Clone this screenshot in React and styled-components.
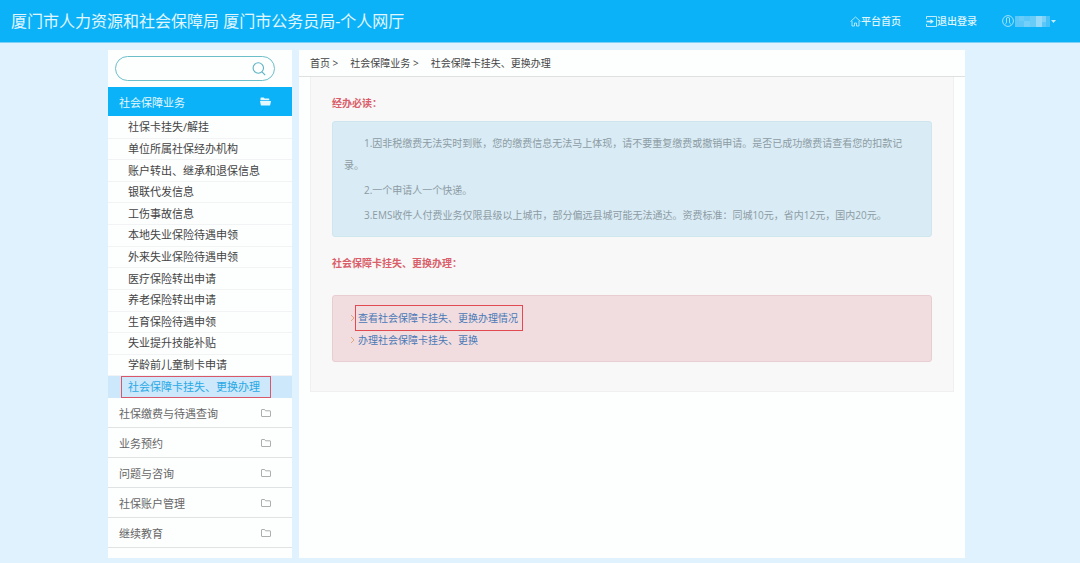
import styled, { createGlobalStyle } from 'styled-components'

const GlobalStyle = createGlobalStyle`
  * {
    box-sizing: border-box;
  }
  body {
    margin: 0;
    background: #e0f2fd;
    font-family: 'Open Sans', 'Noto Sans CJK SC', sans-serif;
    font-size: 10px;
    color: #444;
  }
  ul, ol, p, h1, h2 {
    margin: 0;
    padding: 0;
    list-style: none;
  }
  a {
    color: inherit;
    text-decoration: none;
  }
  button, input {
    font: inherit;
    color: inherit;
    border: 0;
    padding: 0;
    background: none;
  }
`

const Page = styled.div`
  display: flex;
  flex-direction: column;
  min-height: 100vh;
`

const Header = styled.header`
  display: flex;
  align-items: center;
  justify-content: space-between;
  height: 43px;
  padding: 0 24px 0 11px;
  color: #e2f6ff;
  background: #0bb2f8;
  border-bottom: 1px solid #7fd0f5;
`

const SiteTitle = styled.h1`
  font-size: 16px;
  font-weight: 400;
  line-height: 24px;
`

const TopNav = styled.nav`
  display: flex;
  align-items: center;
  gap: 25px;
`

const TopLink = styled.a`
  display: flex;
  align-items: center;
  font-weight: 500;
  line-height: 16px;
`

const UserButton = styled.button`
  display: flex;
  align-items: center;
  gap: 1px;
  cursor: pointer;
`

const Body = styled.div`
  flex: 1;
  display: flex;
  gap: 7px;
  padding: 7px 115px 5px 108px;
`

const Sidebar = styled.aside`
  width: 184px;
  flex-shrink: 0;
  background: #fdfefe;
`

const SearchBox = styled.form`
  display: flex;
  align-items: center;
  height: 25px;
  margin: 6px 17px 6px 7px;
  padding: 0 8px 0 12px;
  border: 1px solid #6cbfc9;
  border-radius: 13px;
  input {
    flex: 1;
    min-width: 0;
    outline: none;
  }
  button {
    display: flex;
    cursor: pointer;
  }
`

const Category = styled.button`
  display: flex;
  align-items: center;
  justify-content: space-between;
  width: 100%;
  height: ${p => (p.$open ? 29 : 30)}px;
  padding: 0 21px 0 11px;
  font-size: 11px;
  color: ${p => (p.$open ? '#e6f8ff' : '#666')};
  background: ${p => (p.$open ? '#0bb2f8' : 'transparent')};
  border-bottom: ${p => (p.$open ? '0' : '1px solid #e0e3e4')};
  cursor: pointer;
`

const SubMenu = styled.ul`
  display: grid;
  grid-auto-rows: 1fr;
  min-height: 282px;
  padding-top: 1px;
`

const SubItem = styled.li`
  display: flex;
  align-items: center;
  padding-left: 20px;
  font-size: 11px;
  line-height: 16px;
  color: ${p => (p.$active ? '#2aa9e6' : '#444')};
  background: ${p => (p.$active ? '#cce8fa' : 'transparent')};
  border-bottom: 1px solid ${p => (p.$active ? '#cce8fa' : '#f1f3f4')};
  a {
    outline: ${p => (p.$active ? '1px solid #d8586a' : '0')};
    outline-offset: 2px;
    padding: 0 8px 0 4px;
    margin-left: -4px;
  }
`

const Main = styled.main`
  flex: 1;
  min-width: 0;
  background: #fdfefe;
`

const Breadcrumb = styled.ol`
  display: flex;
  gap: 12px;
  padding: 0 11px;
  line-height: 26px;
  border-bottom: 1px solid #dfe1e1;
`

const Panel = styled.section`
  margin: 0 11px;
  padding: 16px 21px 29px;
  background: #f8f8f8;
  border: 1px solid #f0f0f0;
  border-top: 0;
`

const PanelTitle = styled.h2`
  margin-bottom: ${p => p.$gap}px;
  font-size: 10px;
  font-weight: 700;
  line-height: 20px;
  color: #d9606a;
`

const Notice = styled.div`
  display: grid;
  gap: 3px;
  margin-bottom: 16px;
  padding: 10px 11px;
  line-height: 22px;
  color: #8c9ba3;
  background: #d9ebf5;
  border: 1px solid #cfe6ef;
  border-radius: 3px;
  p {
    text-indent: 20px;
  }
`

const LinkBox = styled.ul`
  padding: 11px 17px 10px;
  background: #f1dde0;
  border: 1px solid #e8cdd2;
  border-radius: 3px;
`

const LinkItem = styled.li`
  display: flex;
  align-items: center;
  gap: 3px;
  height: 22px;
  color: #4a78b5;
  a {
    padding-right: 2px;
    line-height: 20px;
    outline: ${p => (p.$marked ? '1px solid #e04a50' : '0')};
    outline-offset: 2px;
  }
`

const HomeIcon = () => (
  <svg width="11" height="11" viewBox="0 0 11 11" fill="none" stroke="#d3f2ff" strokeWidth="0.8">
    <path d="M0.5 5.5 5.5 1l5 4.5M2 5v5h2.5V7h2v3H9V5" />
  </svg>
)

const LogoutIcon = () => (
  <svg width="11" height="11" viewBox="0 0 11 11" fill="none" stroke="#d3f2ff" strokeWidth="0.9">
    <path d="M0.5 3V0.500h10v10H0.500V8" />
    <path d="M0.500 5.500h5" strokeWidth="1.6" />
    <path d="M4.500 3 7.800 5.500 4.500 8z" fill="#d3f2ff" stroke="none" />
  </svg>
)

const UserIcon = () => (
  <svg width="12" height="12" viewBox="0 0 12 12" fill="none" stroke="#c5edff" strokeWidth="0.8">
    <circle cx="6" cy="6" r="5.4" />
    <path d="M4.500 3v4.200c0 1-.6 1.400-1.300 2M7.500 3v4.200c0 1 .6 1.400 1.300 2M4.500 3c.8-.7 2.200-.7 3 0" />
  </svg>
)

const MaskedName = () => (
  <svg width="35" height="11" viewBox="0 0 35 11" shapeRendering="crispEdges">
    <rect width="35" height="11" fill="#5cc8f9" />
    <rect x="4" width="5" height="5" fill="#68ccf9" />
    <rect x="9" y="5" width="6" height="6" fill="#74d0f9" />
    <rect x="15" width="6" height="11" fill="#68ccf8" />
    <rect x="21" width="6" height="11" fill="#96daf9" />
    <rect x="27" width="4" height="6" fill="#7ad2f9" />
    <rect x="31" width="4" height="11" fill="#48c1f8" />
  </svg>
)

const Caret = () => (
  <svg width="5" height="3" viewBox="0 0 5 3">
    <path d="M0 0h5L2.5 3z" fill="#c5edff" />
  </svg>
)

const SearchIcon = () => (
  <svg width="14" height="14" viewBox="0 0 14 14" fill="none" stroke="#5cb3c4" strokeWidth="1.1">
    <circle cx="6.3" cy="6" r="5.2" />
    <path d="m10 9.8 3.2 3.4" />
  </svg>
)

const FolderIcon = () => (
  <svg width="10" height="8" viewBox="0 0 10 8" fill="none" stroke="#999" strokeWidth="0.8">
    <path d="M.5 7V1q0-.5.5-.5h2.6l1 1.3H9q.5 0 .5.5V7q0 .5-.5.5H1Q.5 7.5.5 7z" />
  </svg>
)

const FolderOpenIcon = () => (
  <svg width="11" height="9" viewBox="0 0 11 9" fill="#e6f8ff">
    <path d="M.5 3.200V1q0-.6.6-.6h2.600l1 1.200h4q.6 0 .6.6v1z" />
    <path d="M0 4h11l-.8 4q-.1.500-.6.500H1.400q-.5 0-.6-.5z" />
  </svg>
)

const Chevron = () => (
  <svg width="5" height="8" viewBox="0 0 5 8" fill="none" stroke="#e0a070" strokeWidth="0.9">
    <path d="m1 1 3 3-3 3" />
  </svg>
)

const subMenu = [
  '社保卡挂失/解挂',
  '单位所属社保经办机构',
  '账户转出、继承和退保信息',
  '银联代发信息',
  '工伤事故信息',
  '本地失业保险待遇申领',
  '外来失业保险待遇申领',
  '医疗保险转出申请',
  '养老保险转出申请',
  '生育保险待遇申领',
  '失业提升技能补贴',
  '学龄前儿童制卡申请',
  '社会保障卡挂失、更换办理',
]

const categories = ['社保缴费与待遇查询', '业务预约', '问题与咨询', '社保账户管理', '继续教育']

const notices = [
  '1.因非税缴费无法实时到账，您的缴费信息无法马上体现，请不要重复缴费或撤销申请。是否已成功缴费请查看您的扣款记录。',
  '2.一个申请人一个快递。',
  '3.EMS收件人付费业务仅限县级以上城市，部分偏远县城可能无法通达。资费标准：同城10元，省内12元，国内20元。',
]

const App = () => {
  return (
    <>
      <GlobalStyle />
      <Page>
        <Header>
          <SiteTitle>厦门市人力资源和社会保障局 厦门市公务员局-个人网厅</SiteTitle>
          <TopNav>
            <TopLink href="#home"><HomeIcon />平台首页</TopLink>
            <TopLink href="#logout"><LogoutIcon />退出登录</TopLink>
            <UserButton type="button" aria-label="用户">
              <UserIcon />
              <MaskedName />
              <Caret />
            </UserButton>
          </TopNav>
        </Header>
        <Body>
          <Sidebar>
            <SearchBox onSubmit={e => e.preventDefault()}>
              <input type="text" aria-label="搜索" />
              <button type="submit" aria-label="搜索"><SearchIcon /></button>
            </SearchBox>
            <Category type="button" $open>社会保障业务<FolderOpenIcon /></Category>
            <SubMenu>
              {subMenu.map((name, idx) => (
                <SubItem key={name} $active={idx === subMenu.length - 1}>
                  <a href="#item">{name}</a>
                </SubItem>
              ))}
            </SubMenu>
            {categories.map(name => (
              <Category key={name} type="button">{name}<FolderIcon /></Category>
            ))}
          </Sidebar>
          <Main>
            <Breadcrumb>
              <li><a href="#home">首页</a> &gt;</li>
              <li><a href="#business">社会保障业务</a> &gt;</li>
              <li>社会保障卡挂失、更换办理</li>
            </Breadcrumb>
            <Panel>
              <PanelTitle $gap={8}>经办必读：</PanelTitle>
              <Notice>
                {notices.map(text => <p key={text}>{text}</p>)}
              </Notice>
              <PanelTitle $gap={22}>社会保障卡挂失、更换办理：</PanelTitle>
              <LinkBox>
                <LinkItem $marked><Chevron /><a href="#progress">查看社会保障卡挂失、更换办理情况</a></LinkItem>
                <LinkItem><Chevron /><a href="#apply">办理社会保障卡挂失、更换</a></LinkItem>
              </LinkBox>
            </Panel>
          </Main>
        </Body>
      </Page>
    </>
  )
}

export default App
